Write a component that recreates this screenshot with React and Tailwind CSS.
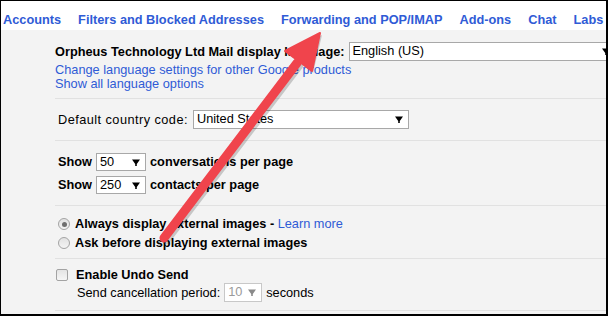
import React from 'react';

const tabs = ['Accounts', 'Filters and Blocked Addresses', 'Forwarding and POP/IMAP', 'Add-ons', 'Chat', 'Labs'];

function Arrow({ color = '#000' }) {
  return (
    <svg width="8" height="7" viewBox="0 0 8 7" className="shrink-0">
      <path d="M0 0.5 H8 L4.8 5 V7 H3.2 V5 Z" fill={color} />
    </svg>
  );
}

function Select({ value, className = '', disabled = false }) {
  return (
    <div className={`flex items-center justify-between bg-white border ${disabled ? 'border-[#c8c8c8] text-[#9a9a9a]' : 'border-[#a8a8a8] text-black'} pl-[3px] pr-[5px] ${className}`}>
      <span className="leading-none">{value}</span>
      <Arrow color={disabled ? '#8a8a8a' : '#000'} />
    </div>
  );
}

function Radio({ checked }) {
  return (
    <div className="w-[12px] h-[12px] rounded-full border border-[#a3a3a3] bg-gradient-to-b from-[#e2e2e2] to-[#f4f4f4] flex items-center justify-center shrink-0">
      {checked && <div className="w-[5px] h-[5px] rounded-full bg-[#6f6f6f]" />}
    </div>
  );
}

export default function App() {
  return (
    <div className="relative w-[608px] h-[316px] border-t border-l border-r-2 border-b-2 border-black bg-[#f3f3f3] overflow-hidden text-[12.75px] text-black" style={{ fontFamily: '"Liberation Sans", Arial, sans-serif' }}>
      <div className="h-[29px] bg-white flex items-start gap-[17px] pl-[2px] pt-[11px] font-bold text-[#2f5bd6] whitespace-nowrap leading-[15px]">
        {tabs.map((t) => (
          <span key={t}>{t}</span>
        ))}
      </div>

      <div className="pl-[54px]">
        <div className="pt-[12px] pb-[7px] border-b border-[#e1e1e1]">
          <div className="flex items-center h-[19px] gap-[4px]">
            <span className="font-bold whitespace-nowrap">Orpheus Technology Ltd Mail display language:</span>
            <Select value="English (US)" className="h-[19px] flex-1 -mr-[10px]" />
          </div>
          <div className="mt-[2px] leading-[14px] text-[#2f5bd6]">Change language settings for other Google products</div>
          <div className="leading-[14px] text-[#2f5bd6]">Show all language options</div>
        </div>

        <div className="pt-[11px] pb-[11px] border-b border-[#e1e1e1] pl-[3px]">
          <div className="flex items-center h-[19px] gap-[5px]">
            <span className="whitespace-nowrap tracking-[0.45px]">Default country code:</span>
            <Select value="United States" className="h-[19px] w-[216px]" />
          </div>
        </div>

        <div className="pt-[12px] pb-[11px] border-b border-[#e1e1e1] pl-[3px] flex flex-col gap-[5px]">
          <div className="flex items-center h-[18px] gap-[4px]">
            <span className="font-bold">Show</span>
            <Select value="50" className="h-[18px] w-[50px]" />
            <span className="font-bold">conversations per page</span>
          </div>
          <div className="flex items-center h-[18px] gap-[4px]">
            <span className="font-bold">Show</span>
            <Select value="250" className="h-[18px] w-[50px]" />
            <span className="font-bold">contacts per page</span>
          </div>
        </div>

        <div className="pt-[9px] pb-[6px] border-b border-[#e1e1e1] pl-[3px]">
          <div className="flex items-center h-[18px] gap-[5px]">
            <Radio checked />
            <span className="font-bold whitespace-nowrap">
              Always display external images - <span className="font-normal text-[#2f5bd6]">Learn more</span>
            </span>
          </div>
          <div className="flex items-center h-[18px] gap-[5px] mt-[1px]">
            <Radio />
            <span className="font-bold whitespace-nowrap">Ask before displaying external images</span>
          </div>
        </div>

        <div className="pt-[8px] pb-[8px] border-b border-[#e1e1e1] pl-[1px]">
          <div className="flex items-center h-[15px] gap-[8px]">
            <div className="w-[12px] h-[12px] rounded-[2px] border border-[#a3a3a3] bg-gradient-to-b from-[#e4e4e4] to-[#f6f6f6] shrink-0" />
            <span className="font-bold">Enable Undo Send</span>
          </div>
          <div className="flex items-center h-[19px] gap-[4px] pl-[21px] mt-[1px]">
            <span>Send cancellation period:</span>
            <Select value="10" disabled className="h-[19px] w-[38px]" />
            <span>seconds</span>
          </div>
        </div>
      </div>

      <svg className="absolute inset-0 pointer-events-none" width="608" height="316" viewBox="0 0 608 316">
        <g transform="translate(2 2)" opacity="0.18">
          <line x1="163" y1="237" x2="296" y2="62" stroke="#000" strokeWidth="9" strokeLinecap="round" />
          <polygon points="319,32 310,70 285,51" fill="#000" />
        </g>
        <line x1="163" y1="237" x2="296" y2="62" stroke="#f0444c" strokeWidth="9" strokeLinecap="round" />
        <polygon points="319,32 311,70 284,50" fill="#f0444c" stroke="#f0444c" strokeWidth="2" strokeLinejoin="round" />
      </svg>
    </div>
  );
}
